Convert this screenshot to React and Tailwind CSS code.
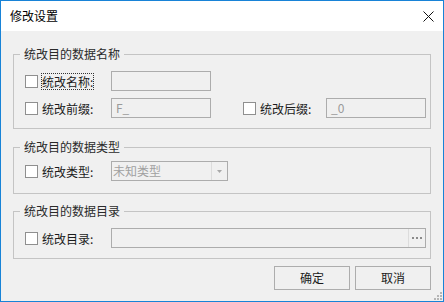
import React from "react";

const font = { fontFamily: '"Noto Sans CJK SC", "Microsoft YaHei", sans-serif' };

const Check = ({ label, focused }) => (
  <div className="flex items-center">
    <span className="w-[13px] h-[13px] border border-[#8f8f8f] bg-white shrink-0" />
    <span
      className={
        "ml-[3px] border px-0 leading-[15px] text-[12px] text-[#1b1b1b] " +
        (focused ? "border-dotted border-[#333]" : "border-transparent")
      }
    >
      {label}
    </span>
  </div>
);

const TextBox = ({ value, width }) => (
  <div
    className={
      "h-[20px] border border-[#acacac] bg-[#f0f0f0] flex items-center pl-[4px] text-[12px] text-[#9a9a9a] " +
      width
    }
  >
    {value}
  </div>
);

const Group = ({ title, children, className }) => (
  <fieldset className={"border border-[#c4c4c4] pl-[6px] pr-[3px] " + className}>
    <legend className="px-[4px] text-[12px] leading-[12px] text-[#2a2a2a]">
      {title}
    </legend>
    <div className="ml-[5px]">{children}</div>
  </fieldset>
);

export default function App() {
  return (
    <div
      className="w-[444px] h-[302px] border border-[#1883d7] flex flex-col bg-[#f0f0f0]"
      style={font}
    >
      {/* 标题栏 */}
      <div className="h-[30px] bg-white flex items-center justify-between pl-[9px] pr-[9px] shrink-0">
        <span className="text-[12px] leading-[12px] text-black">修改设置</span>
        <svg width="11" height="11" viewBox="0 0 11 11">
          <path d="M0.5 0.5 L10.5 10.5 M10.5 0.5 L0.5 10.5" stroke="#111" strokeWidth="1" />
        </svg>
      </div>

      <div className="flex-1 flex flex-col px-3 pt-[17px] relative">
        {/* 名称 */}
        <Group title="统改目的数据名称" className="pt-[11px] pb-[10px]">
          <div className="flex flex-col gap-[7px]">
            <div className="flex items-center">
              <div className="w-[86px]">
                <Check label="统改名称:" focused />
              </div>
              <TextBox value="" width="w-[100px]" />
            </div>
            <div className="flex items-center">
              <div className="w-[86px]">
                <Check label="统改前缀:" />
              </div>
              <TextBox value="F_" width="w-[100px]" />
              <div className="w-[83px] ml-[32px]">
                <Check label="统改后缀:" />
              </div>
              <TextBox value="_0" width="w-[100px]" />
            </div>
          </div>
        </Group>

        {/* 类型 */}
        <Group title="统改目的数据类型" className="mt-[12px] pt-[8px] pb-[12px]">
          <div className="flex items-center">
            <div className="w-[86px]">
              <Check label="统改类型:" />
            </div>
            <div className="w-[117px] h-[20px] border border-[#acacac] bg-[#f0f0f0] flex">
              <div className="flex-1 flex items-center pl-[1px] text-[12px] text-[#a0a0a0]">
                未知类型
              </div>
              <div className="w-[16px] border-l border-[#dcdcdc] flex items-center justify-center">
                <svg width="5" height="3" viewBox="0 0 5 3">
                  <path d="M0 0 H5 L2.5 3 Z" fill="#a8a8a8" />
                </svg>
              </div>
            </div>
          </div>
        </Group>

        {/* 目录 */}
        <Group title="统改目的数据目录" className="mt-[11px] pt-[11px] pb-[10px]">
          <div className="flex items-center">
            <div className="w-[86px]">
              <Check label="统改目录:" />
            </div>
            <div className="w-[315px] h-[20px] border border-[#acacac] bg-[#f0f0f0] flex">
              <div className="flex-1" />
              <div className="w-[17px] border-l border-[#dcdcdc] flex items-center justify-center">
                <svg width="11" height="2" viewBox="0 0 11 2">
                  <rect x="0" y="0" width="2" height="2" fill="#8a8a8a" />
                  <rect x="4" y="0" width="2" height="2" fill="#8a8a8a" />
                  <rect x="8" y="0" width="2" height="2" fill="#8a8a8a" />
                </svg>
              </div>
            </div>
          </div>
        </Group>

        {/* 按钮 */}
        <div className="flex justify-end gap-[5px] mt-[7px]">
          <button className="w-[76px] h-[24px] border border-[#adadad] bg-[#f0f0f0] text-[12px] text-[#1b1b1b]">
            确定
          </button>
          <button className="w-[76px] h-[24px] border border-[#adadad] bg-[#f0f0f0] text-[12px] text-[#1b1b1b]">
            取消
          </button>
        </div>

        {/* 尺寸调整角 */}
        <svg className="absolute right-[1px] bottom-[1px]" width="8" height="8" viewBox="0 0 8 8">
          <rect x="6" y="0" width="2" height="2" fill="#b5b5b5" />
          <rect x="3" y="3" width="2" height="2" fill="#b5b5b5" />
          <rect x="6" y="3" width="2" height="2" fill="#b5b5b5" />
          <rect x="0" y="6" width="2" height="2" fill="#b5b5b5" />
          <rect x="3" y="6" width="2" height="2" fill="#b5b5b5" />
          <rect x="6" y="6" width="2" height="2" fill="#b5b5b5" />
        </svg>
      </div>
    </div>
  );
}
